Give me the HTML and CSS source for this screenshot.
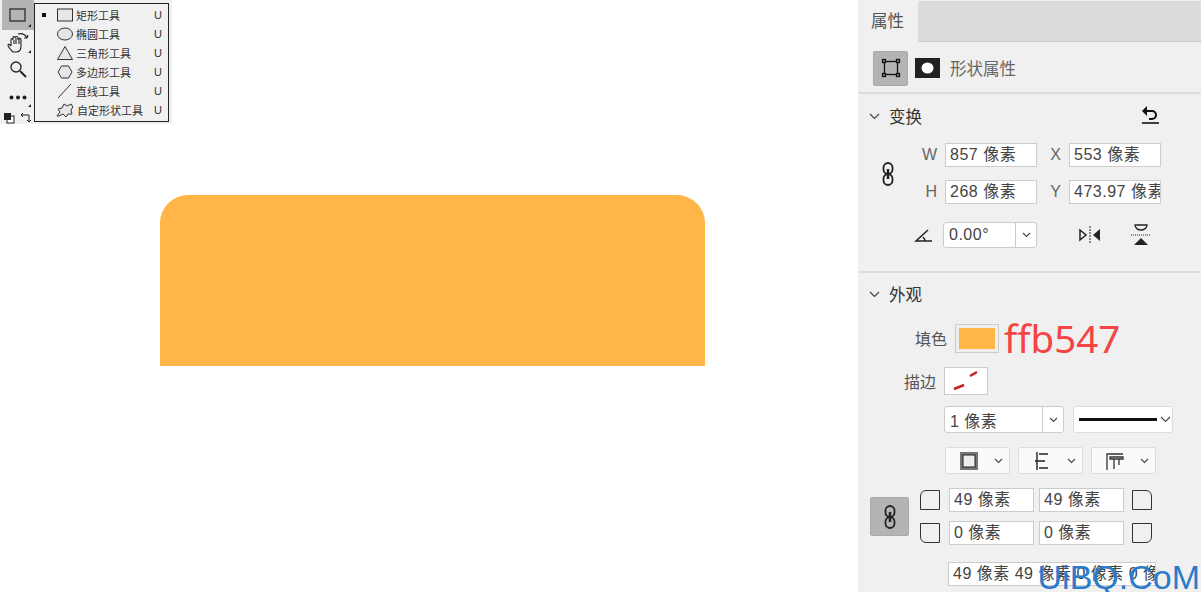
FILE: index.html
```html
<!DOCTYPE html>
<html>
<head>
	<title>形状属性</title>
	<link rel="stylesheet" href="styles.css">
</head>
<body>
	<div class="canvas">
		<div class="toolbar">
			<div class="tools">
				<div class="tool tool--active tool--more">
					<svg width="18" height="14" viewBox="0 0 18 14"><rect x="1" y="1" width="15" height="12" fill="none" stroke="#222" stroke-width="1.2"/></svg>
				</div>
				<div class="tool tool--more">
					<svg width="22" height="22" viewBox="0 0 22 22" fill="none" stroke="#222" stroke-width="1.1"><path d="M6 20c-2-2-5-5-5-7 0-1 2-1 3 1V8c0-2 2-2 2 0V6c0-2 2-2 2 0v0c0-2 3-2 3 0v1c1-1 3-1 3 1v6c0 4-2 6-5 6H6z"/><path d="M7 12V8M9 12V6M12 12V7"/><path d="M11 2c4-1 7 0 9 4M20 6l1-3M20 6l-3 0"/></svg>
				</div>
				<div class="tool">
					<svg width="18" height="18" viewBox="0 0 18 18" fill="none" stroke="#222" stroke-width="1.3"><circle cx="7" cy="7" r="5"/><path d="M11 11l6 6" stroke-width="2"/></svg>
				</div>
				<div class="tool tool--dots tool--more">
					<svg width="18" height="5" viewBox="0 0 18 5" fill="#222"><circle cx="2.500" cy="2.500" r="2"/><circle cx="9" cy="2.500" r="2"/><circle cx="15.500" cy="2.500" r="2"/></svg>
				</div>
				<div class="tool-swatches">
					<svg width="12" height="12" viewBox="0 0 12 12"><rect x="4" y="4" width="7" height="7" fill="#fff" stroke="#222"/><rect x="1" y="1" width="7" height="7" fill="#222"/></svg>
					<svg width="12" height="12" viewBox="0 0 12 12" fill="none" stroke="#222"><path d="M1 3h8v7M1 3l2-2M1 3l2 2M9 10l-2-2M9 10l2-2"/></svg>
				</div>
			</div>
			<ul class="flyout">
				<li class="flyout__item">
					<span class="flyout__mark"></span>
					<svg class="flyout__icon" width="18" height="16" viewBox="0 0 18 16"><rect x="1.5" y="2" width="15" height="12" fill="#e6e6e6" stroke="#333"/></svg>
					<span class="flyout__name">矩形工具</span><span class="flyout__key">U</span>
				</li>
				<li class="flyout__item">
					<span class="flyout__mark flyout__mark--off"></span>
					<svg class="flyout__icon" width="18" height="16" viewBox="0 0 18 16"><ellipse cx="9" cy="8" rx="7.5" ry="6" fill="#e6e6e6" stroke="#333"/></svg>
					<span class="flyout__name">椭圆工具</span><span class="flyout__key">U</span>
				</li>
				<li class="flyout__item">
					<span class="flyout__mark flyout__mark--off"></span>
					<svg class="flyout__icon" width="18" height="16" viewBox="0 0 18 16"><path d="M9 1.5L16.5 14.5H1.5z" fill="#e6e6e6" stroke="#333"/></svg>
					<span class="flyout__name">三角形工具</span><span class="flyout__key">U</span>
				</li>
				<li class="flyout__item">
					<span class="flyout__mark flyout__mark--off"></span>
					<svg class="flyout__icon" width="18" height="16" viewBox="0 0 18 16"><path d="M5.5 2h7L16 8l-3.500 6h-7L2 8z" fill="#e6e6e6" stroke="#333"/></svg>
					<span class="flyout__name">多边形工具</span><span class="flyout__key">U</span>
				</li>
				<li class="flyout__item">
					<span class="flyout__mark flyout__mark--off"></span>
					<svg class="flyout__icon" width="18" height="16" viewBox="0 0 18 16"><path d="M2 15L15 1" fill="none" stroke="#333"/></svg>
					<span class="flyout__name">直线工具</span><span class="flyout__key">U</span>
				</li>
				<li class="flyout__item">
					<span class="flyout__mark flyout__mark--off"></span>
					<svg class="flyout__icon" width="19" height="16" viewBox="0 0 19 16"><path d="M1 14l3-4-2-3 4-1 2-4 3 2 4-2 2 3-2 3 1 4-4 0-2 3-3-3-4 2z" fill="#e6e6e6" stroke="#333"/></svg>
					<span class="flyout__name">自定形状工具</span><span class="flyout__key">U</span>
				</li>
			</ul>
		</div>
		<div class="shape"></div>
	</div>

	<div class="panel">
		<div class="tabs">
			<div class="tabs__tab">属性</div>
			<div class="tabs__rest"></div>
		</div>

		<div class="mode">
			<div class="btn-square">
				<svg width="20" height="20" viewBox="0 0 20 20" fill="none" stroke="#111" stroke-width="1.3"><rect x="3.500" y="3.500" width="13" height="13"/><g fill="#999"><rect x="1.500" y="1.500" width="3" height="3"/><rect x="15.500" y="1.500" width="3" height="3"/><rect x="1.500" y="15.500" width="3" height="3"/><rect x="15.500" y="15.500" width="3" height="3"/></g></svg>
			</div>
			<svg class="mode__mask" width="25" height="20" viewBox="0 0 25 20"><rect width="25" height="20" fill="#222"/><ellipse cx="12.500" cy="10" rx="6" ry="5.500" fill="#fff"/></svg>
			<div class="mode__title">形状属性</div>
		</div>

		<div class="section section--transform">
			<div class="section__head">
				<svg class="chevron" width="11" height="7" viewBox="0 0 11 7"><path d="M1 1l4.500 4.500L10 1" fill="none" stroke="#444" stroke-width="1.200"/></svg>
				<span class="section__name">变换</span>
				<svg class="section__reset" width="22" height="20" viewBox="0 0 22 20" fill="none" stroke="#111" stroke-width="2"><path d="M6 7h7a4 4 0 0 1 0 8h-3"/><path d="M8 2L3 7l5 5z" fill="#111" stroke="none"/><path d="M3 19h17" stroke-width="1.600"/></svg>
			</div>
			<div class="size">
				<svg class="size__link" width="12" height="24" viewBox="0 0 12 24" fill="none" stroke="#222" stroke-width="1.800"><rect x="1.500" y="1" width="9" height="11" rx="4.500"/><rect x="1.500" y="12" width="9" height="11" rx="4.500"/><path d="M6 7v10" stroke-width="2.500"/></svg>
				<div class="size__grid">
					<span class="size__label">W</span><div class="field">857 像素</div>
					<span class="size__label">X</span><div class="field">553 像素</div>
					<span class="size__label">H</span><div class="field">268 像素</div>
					<span class="size__label">Y</span><div class="field">473.97 像素</div>
				</div>
			</div>
			<div class="angle">
				<svg width="20" height="16" viewBox="0 0 20 16" fill="none" stroke="#222" stroke-width="1.500"><path d="M18 14H2L14 3"/><path d="M11 14c0-2-1-3-2-4"/></svg>
				<div class="select select--angle">
					<span class="select__value">0.00°</span>
					<span class="select__arrow"><svg width="9" height="6" viewBox="0 0 9 6"><path d="M1 1l3.500 3.500L8 1" fill="none" stroke="#444" stroke-width="1.100"/></svg></span>
				</div>
				<svg class="angle__flip-h" width="24" height="20" viewBox="0 0 24 20"><path d="M2 5l6 5-6 5z" fill="none" stroke="#222" stroke-width="1.500"/><path d="M12 1v18" stroke="#222" stroke-dasharray="2 1"/><path d="M22 4l-7 6 7 6z" fill="#222"/></svg>
				<svg class="angle__flip-v" width="22" height="24" viewBox="0 0 22 24"><path d="M5 2h12c0 3-3 5-6 5s-6-2-6-5z" fill="none" stroke="#222" stroke-width="1.300"/><path d="M1 12h20" stroke="#222" stroke-dasharray="1 1"/><path d="M4 22l7-7 7 7z" fill="#222"/></svg>
			</div>
		</div>

		<div class="section section--look">
			<div class="section__head">
				<svg class="chevron" width="11" height="7" viewBox="0 0 11 7"><path d="M1 1l4.500 4.500L10 1" fill="none" stroke="#444" stroke-width="1.200"/></svg>
				<span class="section__name">外观</span>
			</div>
			<div class="fill">
				<span class="fill__label">填色</span>
				<div class="swatch"><div class="swatch__color"></div></div>
				<span class="fill__hex">ffb547</span>
			</div>
			<div class="stroke">
				<span class="stroke__label">描边</span>
				<div class="swatch swatch--none">
					<svg width="42" height="26" viewBox="0 0 42 26"><path d="M9 21L19 17M25 8L32 4" stroke="#c81e1e" stroke-width="2.500"/></svg>
				</div>
			</div>
			<div class="stroke-opts">
				<div class="select select--width">
					<span class="select__value">1 像素</span>
					<span class="select__arrow"><svg width="9" height="6" viewBox="0 0 9 6"><path d="M1 1l3.500 3.500L8 1" fill="none" stroke="#444" stroke-width="1.100"/></svg></span>
				</div>
				<div class="select select--line">
					<span class="select__line"></span>
					<svg width="11" height="7" viewBox="0 0 11 7"><path d="M1 1l4.500 4.500L10 1" fill="none" stroke="#444" stroke-width="1.100"/></svg>
				</div>
			</div>
			<div class="align-opts">
				<div class="drop">
					<svg width="20" height="20" viewBox="0 0 20 20"><rect x="1" y="1" width="18" height="18" fill="#777"/><rect x="4" y="4" width="12" height="12" fill="#eee" stroke="#222"/></svg>
					<svg width="9" height="6" viewBox="0 0 9 6"><path d="M1 1l3.500 3.500L8 1" fill="none" stroke="#444" stroke-width="1.100"/></svg>
				</div>
				<div class="drop">
					<svg width="20" height="20" viewBox="0 0 20 20" fill="none" stroke="#222" stroke-width="1.400"><path d="M5 1v18M16 3H7M13 10H3M16 17H7"/></svg>
					<svg width="9" height="6" viewBox="0 0 9 6"><path d="M1 1l3.500 3.500L8 1" fill="none" stroke="#444" stroke-width="1.100"/></svg>
				</div>
				<div class="drop">
					<svg width="20" height="20" viewBox="0 0 20 20" fill="none" stroke="#333" stroke-width="1.300"><path d="M2 19V3h16M5 6h13v2H5zM9 8v10M14 8v6"/></svg>
					<svg width="9" height="6" viewBox="0 0 9 6"><path d="M1 1l3.500 3.500L8 1" fill="none" stroke="#444" stroke-width="1.100"/></svg>
				</div>
			</div>
			<div class="radius">
				<div class="btn-square btn-square--link">
					<svg width="12" height="24" viewBox="0 0 12 24" fill="none" stroke="#222" stroke-width="1.800"><rect x="1.500" y="1" width="9" height="11" rx="4.500"/><rect x="1.500" y="12" width="9" height="11" rx="4.500"/><path d="M6 7v10" stroke-width="2.500"/></svg>
				</div>
				<div class="radius__grid">
					<span class="corner corner--tl"></span><div class="field">49 像素</div><div class="field">49 像素</div><span class="corner corner--tr"></span>
					<span class="corner corner--bl"></span><div class="field">0 像素</div><div class="field">0 像素</div><span class="corner corner--br"></span>
				</div>
			</div>
			<div class="field field--summary">49 像素 49 像素 0 像素 0 像素</div>
		</div>
	</div>

	<div class="watermark">UiBQ.CoM</div>
</body>
</html>
```

FILE: styles.css
```css
* {
	box-sizing: border-box;
}
html, body {
	height: 100%;
}
body {
	position: relative;
	display: flex;
	margin: 0;
	overflow: hidden;
	background: #fff;
	color: #333;
	font-family: "Liberation Sans", "Noto Sans CJK SC", sans-serif;
}

/* canvas */
.canvas {
	position: relative;
	flex: 0 0 858px;
	padding: 195px 0 0 160px;
}
.shape {
	width: 545px;
	height: 171px;
	background: #ffb547;
	border-radius: 28px 28px 0 0;
}

/* tools + flyout */
.toolbar {
	position: absolute;
	top: 0;
	left: 0;
	display: flex;
	width: 172px;
	height: 124px;
	background: #f0f0f0;
}
.tools {
	display: flex;
	flex-direction: column;
	width: 34px;
	padding-left: 2px;
}
.tool {
	position: relative;
	display: flex;
	align-items: center;
	justify-content: center;
	height: 26px;
}
.tool--active {
	height: 30px;
	background: #b4b4b4;
}
.tool--dots {
	height: 28px;
	padding-top: 3px;
}
.tool--more::after {
	content: "";
	position: absolute;
	right: 3px;
	bottom: 3px;
	border-style: solid;
	border-width: 0 0 3px 3px;
	border-color: transparent transparent #222 transparent;
}
.tool-swatches {
	display: flex;
	gap: 5px;
	margin-top: 2px;
	margin-left: 1px;
}
.flyout {
	align-self: flex-start;
	width: 135px;
	height: 119px;
	margin: 3px 0 0;
	padding: 1px 0 0;
	list-style: none;
	background: #f0f0f0;
	border: 1px solid #222;
}
.flyout__item {
	display: flex;
	align-items: center;
	height: 19px;
	padding-left: 7px;
	font-size: 11px;
	color: #333;
}
.flyout__mark {
	flex: none;
	width: 4px;
	height: 4px;
	margin-right: 10px;
	background: #111;
}
.flyout__mark--off {
	background: none;
}
.flyout__icon {
	flex: none;
	margin-right: 2px;
}
.flyout__name {
	flex: 1;
	white-space: nowrap;
}
.flyout__key {
	width: 14px;
}

/* right panel */
.panel {
	flex: 1;
	display: flex;
	flex-direction: column;
	background: #f0f0f0;
	font-size: 16px;
}
.tabs {
	display: flex;
	height: 43px;
	padding-top: 1px;
}
.tabs__tab {
	width: 60px;
	padding: 7px 0 0 13px;
	font-size: 16.500px;
	color: #555;
}
.tabs__rest {
	flex: 1;
	height: 41px;
	background: #dcdcdc;
	border-bottom: 1px solid #ccc;
	border-left: 1px solid #ddd;
}
.mode {
	display: flex;
	align-items: center;
	height: 51px;
	padding: 8px 0 7px 15px;
	border-bottom: 2px solid #dcdcdc;
}
.btn-square {
	display: flex;
	align-items: center;
	justify-content: center;
	width: 35px;
	height: 35px;
	background: #b4b4b4;
	border: 1px solid #aaa;
	border-radius: 2px;
}
.mode__mask {
	margin-left: 7px;
}
.mode__title {
	margin-left: 10px;
	font-size: 16.500px;
	color: #666;
}
.section--transform {
	height: 179px;
	border-bottom: 2px solid #dcdcdc;
}
.section__head {
	display: flex;
	align-items: center;
	height: 22px;
	margin-top: 11px;
	padding-left: 11px;
}
.section__name {
	margin-left: 9px;
	font-size: 16.500px;
	color: #333;
}
.section__reset {
	margin-left: 217px;
	margin-top: -4px;
}
.size {
	display: flex;
	align-items: center;
	margin-top: 16px;
	padding-left: 24px;
}
.size__grid {
	display: grid;
	grid-template-columns: 26px 92px 32px 92px;
	grid-auto-rows: 24px;
	row-gap: 13px;
	align-items: center;
	margin-left: 25px;
}
.size__label {
	font-size: 16px;
	color: #666;
	text-align: right;
	padding-right: 8px;
}
.field {
	height: 24px;
	padding: 0 0 0 4px;
	overflow: hidden;
	white-space: nowrap;
	font-size: 16px;
	letter-spacing: 0.500px;
	line-height: 22px;
	color: #444;
	background: #fff;
	border: 1px solid #ccc;
}
.angle {
	display: flex;
	align-items: center;
	margin-top: 18px;
	padding-left: 56px;
}
.select {
	display: flex;
	height: 26px;
	background: #fff;
	border: 1px solid #ccc;
	border-radius: 3px;
	align-items: center;
}
.select--angle {
	width: 94px;
	margin-left: 9px;
}
.select__value {
	flex: 1;
	padding-left: 5px;
	font-size: 16px;
	letter-spacing: 0.500px;
	color: #444;
}
.select__arrow {
	display: flex;
	align-items: center;
	justify-content: center;
	width: 21px;
	height: 100%;
	border-left: 1px solid #ccc;
}
.angle__flip-h {
	margin-left: 41px;
}
.angle__flip-v {
	margin-left: 28px;
}
.section--look {
	flex: 1;
}
.section--look .section__head {
	margin-top: 10px;
}
.fill {
	display: flex;
	align-items: center;
	height: 44px;
	margin-top: 11px;
	padding-left: 57px;
}
.fill__label,
.stroke__label {
	font-size: 16px;
	color: #555;
}
.swatch {
	display: flex;
	align-items: center;
	justify-content: center;
	width: 44px;
	height: 29px;
	margin-left: 8px;
	background: #eee;
	border: 1px solid #ccc;
}
.swatch__color {
	width: 36px;
	height: 21px;
	background: #ffb547;
}
.swatch--none {
	background: #fff;
}
.fill__hex {
	margin-left: 5px;
	font-family: "Noto Sans", sans-serif;
	font-size: 38.500px;
	line-height: 1;
	color: #f64343;
}
.stroke {
	display: flex;
	align-items: center;
	height: 29px;
	margin-top: 6px;
	padding-left: 46px;
}
.stroke .swatch {
	height: 28px;
}
.stroke-opts {
	display: flex;
	gap: 9px;
	margin-top: 11px;
	padding-left: 86px;
}
.select--width {
	width: 120px;
	height: 27px;
}
.select--line {
	width: 100px;
	height: 27px;
	padding: 0 1px 0 5px;
	justify-content: space-between;
	border-color: #ddd;
}
.select__line {
	width: 78px;
	height: 3px;
	background: #111;
}
.align-opts {
	display: flex;
	gap: 8px;
	margin-top: 14px;
	padding-left: 87px;
}
.drop {
	display: flex;
	align-items: center;
	justify-content: space-between;
	width: 65px;
	height: 27px;
	padding: 0 6px 0 13px;
	background: #fafafa;
	border: 1px solid #ddd;
	border-radius: 2px;
}
.radius {
	display: flex;
	align-items: center;
	margin-top: 14px;
	padding-left: 12px;
}
.btn-square--link {
	width: 39px;
	height: 39px;
}
.radius__grid {
	display: grid;
	grid-template-columns: 29px 90px 93px 20px;
	grid-auto-rows: 24px;
	row-gap: 9px;
	align-items: center;
	margin-left: 11px;
}
.radius__grid .field {
	width: 85px;
}
.corner {
	display: block;
	width: 20px;
	height: 20px;
	border: 1.500px solid #333;
}
.corner--tl {
	border-top-left-radius: 6px;
}
.corner--tr {
	border-top-right-radius: 6px;
}
.corner--bl {
	border-bottom-left-radius: 6px;
}
.corner--br {
	border-bottom-right-radius: 6px;
}
.field--summary {
	width: 208px;
	margin: 17px 0 0 90px;
}

/* site mark over the screenshot */
.watermark {
	position: absolute;
	right: 1px;
	bottom: -4px;
	font-family: "Liberation Sans", sans-serif;
	font-size: 34px;
	line-height: 38px;
	color: #2a7ccb;
}
```
